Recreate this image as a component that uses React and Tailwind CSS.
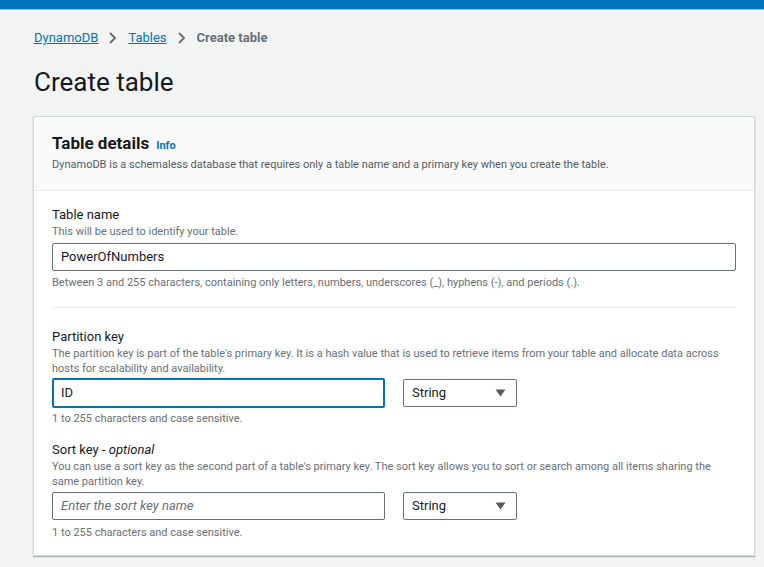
import React from 'react';

const font = { fontFamily: '"Roboto", "Liberation Sans", sans-serif' };

const Select = () => (
  <div className="w-[114px] h-[28px] border border-[#687078] rounded-[2px] flex items-center justify-between pl-[8px] pr-[10px] text-[13px] text-[#16191f] bg-white">
    <span>String</span>
    <svg width="11" height="8" viewBox="0 0 11 8">
      <path d="M0.5 0.5 H10.5 L5.5 7.5 Z" fill="#545b64" />
    </svg>
  </div>
);

const App = () => {
  return (
    <div className="min-h-[567px] bg-[#f2f3f3] text-[#16191f]" style={font}>
      <div className="h-[9px] bg-[#0073bb]" />
      <div className="h-[1px] bg-[#aab7b8]" />
      <div className="pl-[33px] pr-[10px]">
        <nav className="flex items-center h-[20px] mt-[18px] pl-[1px] text-[13px]">
          <a href="#" className="text-[#0073bb] underline">DynamoDB</a>
          <svg className="mx-[9px]" width="12" height="14" viewBox="0 0 12 14">
            <path d="M3 2 L8 7 L3 12" stroke="#687078" strokeWidth="2" fill="none" />
          </svg>
          <a href="#" className="text-[#0073bb] underline">Tables</a>
          <svg className="mx-[9px]" width="12" height="14" viewBox="0 0 12 14">
            <path d="M3 2 L8 7 L3 12" stroke="#687078" strokeWidth="2" fill="none" />
          </svg>
          <span className="text-[#687078] font-bold">Create table</span>
        </nav>
        <h1 className="text-[26px] leading-[32px] mt-[18px] pl-[1px] font-normal">Create table</h1>
        <div className="mt-[18px] w-[722px] bg-white border border-[#d5dbdb] shadow-[0_1px_1px_0_rgba(0,28,36,0.3)]">
          <div className="bg-[#fafafa] border-b border-[#eaeded] px-[18px] pt-[15px] pb-[17px]">
            <div className="flex items-baseline gap-[7px]">
              <h2 className="text-[17px] font-bold leading-[22px]">Table details</h2>
              <a href="#" className="text-[11px] font-bold text-[#0073bb]">Info</a>
            </div>
            <p className="text-[11px] text-[#545b64] leading-[16px] mt-[2px]">
              DynamoDB is a schemaless database that requires only a table name and a primary key when you create the table.
            </p>
          </div>
          <div className="px-[18px] pt-[15px] pb-[14px]">
            <div className="w-[684px]">
              <label className="block text-[13px] leading-[18px]">Table name</label>
              <p className="text-[11px] leading-[16px] text-[#687078]">This will be used to identify your table.</p>
              <div className="mt-[3px] h-[28px] border border-[#687078] rounded-[2px] flex items-center px-[8px] text-[13px]">PowerOfNumbers</div>
              <p className="mt-[4px] text-[11px] leading-[16px] text-[#687078]">
                Between 3 and 255 characters, containing only letters, numbers, underscores (_), hyphens (-), and periods (.).
              </p>
              <div className="mt-[16px] border-t border-[#eaeded]" />

              <label className="block mt-[20px] text-[13px] leading-[18px]">Partition key</label>
              <p className="text-[11px] leading-[15px] text-[#687078]">
                The partition key is part of the table's primary key. It is a hash value that is used to retrieve items from your table and allocate data across hosts for scalability and availability.
              </p>
              <div className="mt-[2px] flex gap-[18px]">
                <div className="w-[333px] h-[30px] border-2 border-[#0073bb] rounded-[2px] flex items-center px-[7px] text-[13px]">ID</div>
                <div className="pt-[1px]"><Select /></div>
              </div>
              <p className="mt-[3px] text-[11px] leading-[16px] text-[#687078]">1 to 255 characters and case sensitive.</p>

              <label className="block mt-[14px] text-[13px] leading-[18px]">Sort key - <i>optional</i></label>
              <p className="text-[11px] leading-[15px] text-[#687078]">
                You can use a sort key as the second part of a table's primary key. The sort key allows you to sort or search among all items sharing the same partition key.
              </p>
              <div className="mt-[3px] flex gap-[18px]">
                <div className="w-[333px] h-[28px] border border-[#687078] rounded-[2px] flex items-center px-[8px] text-[13px] italic text-[#687078]">Enter the sort key name</div>
                <Select />
              </div>
              <p className="mt-[5px] text-[11px] leading-[16px] text-[#687078]">1 to 255 characters and case sensitive.</p>
            </div>
          </div>
        </div>
      </div>
    </div>
  );
};

export default App;
